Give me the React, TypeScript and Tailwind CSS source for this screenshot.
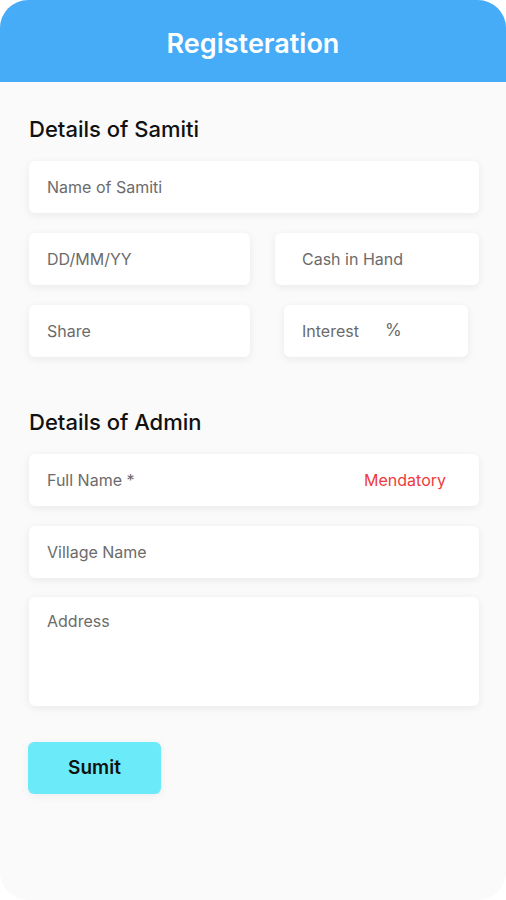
import React from "react";

const Field = ({ label, className = "" }: { label: string; className?: string }) => (
  <div
    className={`h-[52px] bg-white rounded-md shadow-[0_2px_8px_rgba(0,0,0,0.07)] flex items-center px-[18px] text-[16px] text-[#6b6b6b] ${className}`}
  >
    {label}
  </div>
);

const App = () => {
  return (
    <div className="w-[506px] h-[900px] bg-white" style={{ fontFamily: "Inter, 'Noto Sans', sans-serif" }}>
      <div className="w-full h-full rounded-[28px] overflow-hidden bg-[#fafafa] flex flex-col">
        {/* Header */}
        <div className="h-[82px] bg-[#47acf7] flex items-center justify-center">
          <h1 className="text-white text-[27px] font-semibold pt-[6px]">Registeration</h1>
        </div>

        <div className="px-[29px] pr-[27px]">
          {/* Samiti */}
          <h2 className="mt-[35px] text-[22px] font-medium text-[#111] leading-[24px]">Details of Samiti</h2>
          <Field label="Name of Samiti" className="mt-[20px]" />
          <div className="mt-[20px] flex">
            <Field label="DD/MM/YY" className="w-[221px]" />
            <Field label="Cash in Hand" className="w-[204px] ml-[25px] pl-[27px]" />
          </div>
          <div className="mt-[20px] flex">
            <Field label="Share" className="w-[221px]" />
            <div className="w-[184px] ml-[34px] h-[52px] bg-white rounded-md shadow-[0_2px_8px_rgba(0,0,0,0.07)] flex items-center pl-[18px] text-[16px] text-[#6b6b6b]">
              <span>Interest</span>
              <span className="ml-[26px] text-[17px]">%</span>
            </div>
          </div>

          {/* Admin */}
          <h2 className="mt-[53px] text-[22px] font-medium text-[#111] leading-[24px]">Details of Admin</h2>
          <div className="mt-[20px] h-[52px] bg-white rounded-md shadow-[0_2px_8px_rgba(0,0,0,0.07)] flex items-center justify-between pl-[18px] pr-[33px] text-[16px]">
            <span className="text-[#6b6b6b]">Full Name *</span>
            <span className="text-[#ee3b3b]">Mendatory</span>
          </div>
          <Field label="Village Name" className="mt-[20px]" />
          <div className="mt-[19px] h-[109px] bg-white rounded-md shadow-[0_2px_8px_rgba(0,0,0,0.07)] px-[18px] pt-[12px] text-[16px] text-[#6b6b6b]">
            Address
          </div>

          <button className="mt-[36px] -ml-[1px] w-[133px] h-[52px] rounded-md bg-[#6beaf9] text-[19px] font-semibold text-[#111] shadow-[0_2px_8px_rgba(0,0,0,0.06)]">
            Sumit
          </button>
        </div>
      </div>
    </div>
  );
};

export default App;
